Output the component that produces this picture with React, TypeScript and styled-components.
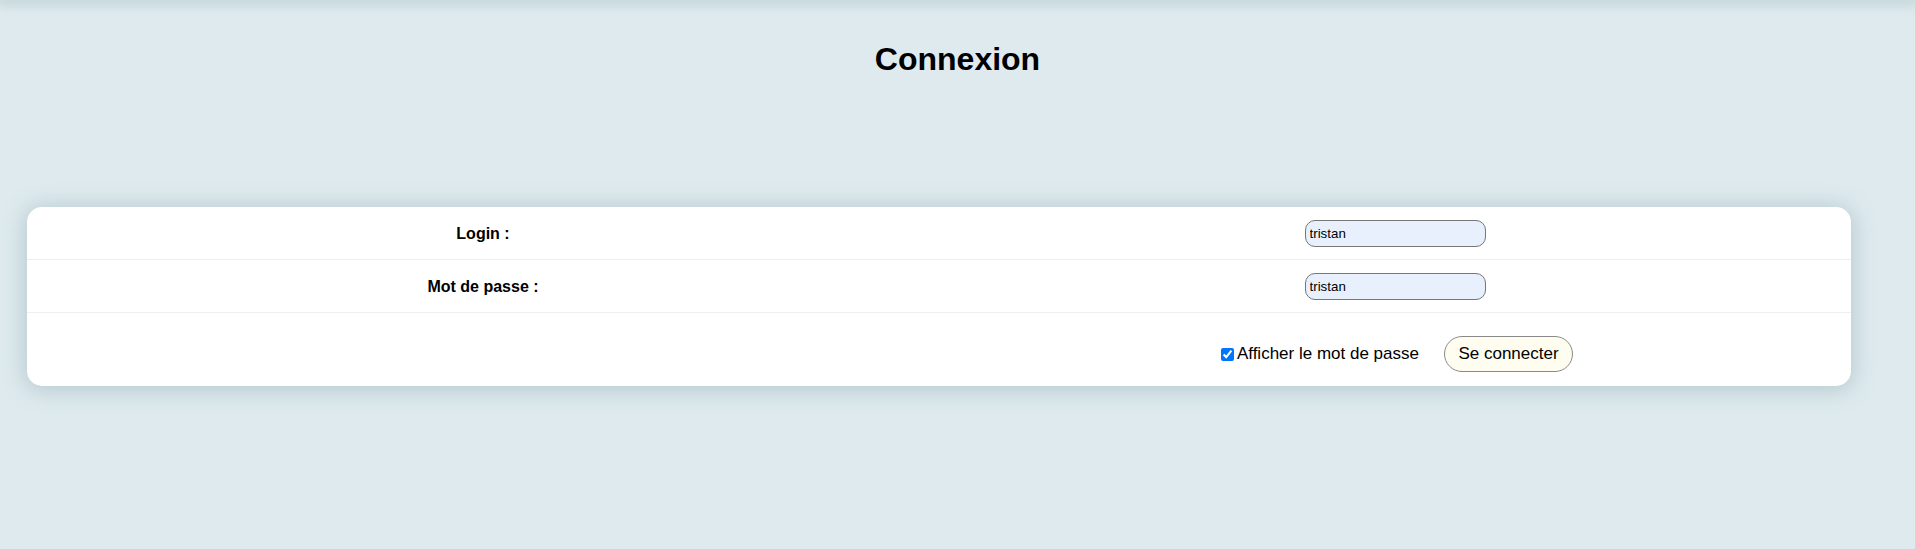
import React from "react";
import styled, { createGlobalStyle } from "styled-components";

const GlobalStyle = createGlobalStyle`
  html, body {
    margin: 0;
    padding: 0;
    background: #deeaee;
    font-family: "Liberation Sans", Arial, sans-serif;
    color: #000;
  }
`;

const Page = styled.div`
  min-height: 549px;
  display: flex;
  flex-direction: column;
`;

const TopShadow = styled.div`
  height: 0;
  box-shadow: 0 0 12px 3px rgba(120, 150, 150, 0.45);
`;

const Title = styled.h1`
  margin: 0;
  padding-top: 41px;
  text-align: center;
  font-size: 32px;
  font-weight: bold;
`;

const Card = styled.div`
  margin: 129px 64px 0 27px;
  background: #fff;
  border-radius: 15px;
  box-shadow: 0 2px 22px 2px rgba(110, 140, 145, 0.35);
  overflow: hidden;
`;

const Row = styled.div<{ $last?: boolean }>`
  display: grid;
  grid-template-columns: 1fr 1fr;
  align-items: center;
  padding: ${({ $last }) => ($last ? "23px 0 14px" : "13px 0 12px")};
  border-bottom: ${({ $last }) => ($last ? "none" : "1px solid #efefef")};
`;

const Label = styled.label`
  text-align: center;
  font-size: 16px;
  font-weight: bold;
`;

const Cell = styled.div`
  display: flex;
  justify-content: center;
  align-items: center;
  gap: 25px;
`;

const Input = styled.input`
  box-sizing: border-box;
  width: 181px;
  height: 27px;
  padding: 1px 4px;
  border: 1px solid #767676;
  border-radius: 10px;
  background: #e8f0fe;
  font-family: "Liberation Sans", Arial, sans-serif;
  font-size: 13.33px;
  color: #000;
  outline: none;
`;

const CheckLabel = styled.label`
  display: flex;
  align-items: center;
  font-size: 17px;

  input {
    margin: 3px 3px 3px 4px;
    width: 13px;
    height: 13px;
  }
`;

const Button = styled.button`
  box-sizing: border-box;
  height: 36px;
  padding: 0 13.5px;
  border: 1px solid #8a8a8a;
  border-radius: 18px;
  background: #fffcf0;
  font-family: "Liberation Sans", Arial, sans-serif;
  font-size: 17px;
  color: #000;
  cursor: pointer;
`;

export default function App() {
  return (
    <Page>
      <GlobalStyle />
      <TopShadow />
      <Title>Connexion</Title>
      <Card>
        <Row>
          <Label htmlFor="login">Login :</Label>
          <Cell>
            <Input id="login" type="text" defaultValue="tristan" />
          </Cell>
        </Row>
        <Row>
          <Label htmlFor="pwd">Mot de passe :</Label>
          <Cell>
            <Input id="pwd" type="text" defaultValue="tristan" />
          </Cell>
        </Row>
        <Row $last>
          <div />
          <Cell>
            <CheckLabel>
              <input type="checkbox" defaultChecked />
              Afficher le mot de passe
            </CheckLabel>
            <Button>Se connecter</Button>
          </Cell>
        </Row>
      </Card>
    </Page>
  );
}
